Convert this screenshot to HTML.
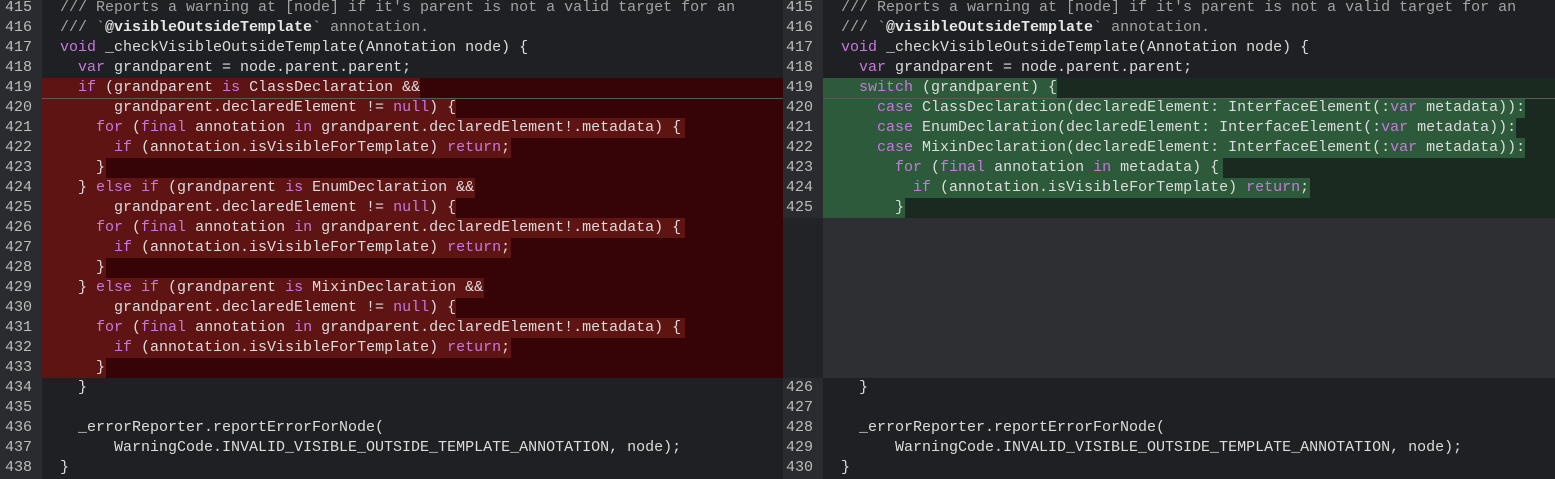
<!DOCTYPE html>
<html><head><meta charset="utf-8"><style>
*{margin:0;padding:0;box-sizing:border-box}
body{width:1555px;height:479px;background:#1f2023;overflow:hidden;position:relative;font-family:"Liberation Mono",monospace;font-size:15px;color:#dcdcdc}
.g{position:absolute;top:0;height:479px;background:#2a2b2f}
.r{position:absolute;height:20px;line-height:20px;white-space:pre}
.n{position:absolute;height:20px;line-height:20px;color:#bdbdbd;text-align:right;width:32px}
.k{color:#c679dd}
.c{color:#a3a3a3}
.b{color:#e6e6e6;font-weight:bold}
.hl{position:absolute;height:20px}
</style></head><body>
<div class="g" style="left:0;width:42px"></div>
<div class="g" style="left:783px;width:40px"></div>
<div style="position:absolute;left:42px;top:78px;width:741px;height:300px;background:#360406"></div>
<div style="position:absolute;left:823px;top:78px;width:732px;height:140px;background:#1b2a21"></div>
<div style="position:absolute;left:783px;top:218px;width:40px;height:160px;background:#222326"></div>
<div style="position:absolute;left:823px;top:218px;width:732px;height:160px;background:#2e2f33"></div>
<!-- red highlights -->
<div class="hl" style="left:42px;top:78px;width:378px;background:#5f1414"></div>
<div class="hl" style="left:42px;top:98px;width:414px;background:#5f1414"></div>
<div class="hl" style="left:42px;top:118px;width:643px;background:#5f1414"></div>
<div class="hl" style="left:42px;top:138px;width:469px;background:#5f1414"></div>
<div class="hl" style="left:42px;top:158px;width:64px;background:#5f1414"></div>
<div class="hl" style="left:42px;top:178px;width:433px;background:#5f1414"></div>
<div class="hl" style="left:42px;top:198px;width:414px;background:#5f1414"></div>
<div class="hl" style="left:42px;top:218px;width:643px;background:#5f1414"></div>
<div class="hl" style="left:42px;top:238px;width:469px;background:#5f1414"></div>
<div class="hl" style="left:42px;top:258px;width:64px;background:#5f1414"></div>
<div class="hl" style="left:42px;top:278px;width:442px;background:#5f1414"></div>
<div class="hl" style="left:42px;top:298px;width:414px;background:#5f1414"></div>
<div class="hl" style="left:42px;top:318px;width:643px;background:#5f1414"></div>
<div class="hl" style="left:42px;top:338px;width:469px;background:#5f1414"></div>
<div class="hl" style="left:42px;top:358px;width:64px;background:#5f1414"></div>
<!-- green highlights -->
<div class="hl" style="left:823px;top:78px;width:234px;background:#2d5a3b"></div>
<div class="hl" style="left:823px;top:98px;width:702px;background:#2d5a3b"></div>
<div class="hl" style="left:823px;top:118px;width:693px;background:#2d5a3b"></div>
<div class="hl" style="left:823px;top:138px;width:702px;background:#2d5a3b"></div>
<div class="hl" style="left:823px;top:158px;width:400px;background:#2d5a3b"></div>
<div class="hl" style="left:823px;top:178px;width:487px;background:#2d5a3b"></div>
<div class="hl" style="left:823px;top:198px;width:82px;background:#2d5a3b"></div>
<div style="position:absolute;left:42px;top:98px;width:741px;height:1px;background:#5a5a5a"></div>
<div style="position:absolute;left:823px;top:98px;width:732px;height:1px;background:#5a5a5a"></div>

<div class="n" style="left:0;top:-2px">415</div>
<div class="n" style="left:0;top:18px">416</div>
<div class="n" style="left:0;top:38px">417</div>
<div class="n" style="left:0;top:58px">418</div>
<div class="n" style="left:0;top:78px">419</div>
<div class="n" style="left:0;top:98px">420</div>
<div class="n" style="left:0;top:118px">421</div>
<div class="n" style="left:0;top:138px">422</div>
<div class="n" style="left:0;top:158px">423</div>
<div class="n" style="left:0;top:178px">424</div>
<div class="n" style="left:0;top:198px">425</div>
<div class="n" style="left:0;top:218px">426</div>
<div class="n" style="left:0;top:238px">427</div>
<div class="n" style="left:0;top:258px">428</div>
<div class="n" style="left:0;top:278px">429</div>
<div class="n" style="left:0;top:298px">430</div>
<div class="n" style="left:0;top:318px">431</div>
<div class="n" style="left:0;top:338px">432</div>
<div class="n" style="left:0;top:358px">433</div>
<div class="n" style="left:0;top:378px">434</div>
<div class="n" style="left:0;top:398px">435</div>
<div class="n" style="left:0;top:418px">436</div>
<div class="n" style="left:0;top:438px">437</div>
<div class="n" style="left:0;top:458px">438</div>

<div class="r" style="left:60px;top:-2px"><span class="c">/// Reports a warning at [node] if it's parent is not a valid target for an</span></div>
<div class="r" style="left:60px;top:18px"><span class="c">/// `</span><span class="b">@visibleOutsideTemplate</span><span class="c">` annotation.</span></div>
<div class="r" style="left:60px;top:38px"><span class="k">void</span> _checkVisibleOutsideTemplate(Annotation node) {</div>
<div class="r" style="left:60px;top:58px">  <span class="k">var</span> grandparent = node.parent.parent;</div>
<div class="r" style="left:60px;top:78px">  <span class="k">if</span> (grandparent <span class="k">is</span> ClassDeclaration &amp;&amp;</div>
<div class="r" style="left:60px;top:98px">      grandparent.declaredElement != <span class="k">null</span>) {</div>
<div class="r" style="left:60px;top:118px">    <span class="k">for</span> (<span class="k">final</span> annotation <span class="k">in</span> grandparent.declaredElement!.metadata) {</div>
<div class="r" style="left:60px;top:138px">      <span class="k">if</span> (annotation.isVisibleForTemplate) <span class="k">return</span>;</div>
<div class="r" style="left:60px;top:158px">    }</div>
<div class="r" style="left:60px;top:178px">  } <span class="k">else if</span> (grandparent <span class="k">is</span> EnumDeclaration &amp;&amp;</div>
<div class="r" style="left:60px;top:198px">      grandparent.declaredElement != <span class="k">null</span>) {</div>
<div class="r" style="left:60px;top:218px">    <span class="k">for</span> (<span class="k">final</span> annotation <span class="k">in</span> grandparent.declaredElement!.metadata) {</div>
<div class="r" style="left:60px;top:238px">      <span class="k">if</span> (annotation.isVisibleForTemplate) <span class="k">return</span>;</div>
<div class="r" style="left:60px;top:258px">    }</div>
<div class="r" style="left:60px;top:278px">  } <span class="k">else if</span> (grandparent <span class="k">is</span> MixinDeclaration &amp;&amp;</div>
<div class="r" style="left:60px;top:298px">      grandparent.declaredElement != <span class="k">null</span>) {</div>
<div class="r" style="left:60px;top:318px">    <span class="k">for</span> (<span class="k">final</span> annotation <span class="k">in</span> grandparent.declaredElement!.metadata) {</div>
<div class="r" style="left:60px;top:338px">      <span class="k">if</span> (annotation.isVisibleForTemplate) <span class="k">return</span>;</div>
<div class="r" style="left:60px;top:358px">    }</div>
<div class="r" style="left:60px;top:378px">  }</div>
<div class="r" style="left:60px;top:418px">  _errorReporter.reportErrorForNode(</div>
<div class="r" style="left:60px;top:438px">      WarningCode.INVALID_VISIBLE_OUTSIDE_TEMPLATE_ANNOTATION, node);</div>
<div class="r" style="left:60px;top:458px">}</div>

<div class="n" style="left:781px;top:-2px">415</div>
<div class="n" style="left:781px;top:18px">416</div>
<div class="n" style="left:781px;top:38px">417</div>
<div class="n" style="left:781px;top:58px">418</div>
<div class="n" style="left:781px;top:78px">419</div>
<div class="n" style="left:781px;top:98px">420</div>
<div class="n" style="left:781px;top:118px">421</div>
<div class="n" style="left:781px;top:138px">422</div>
<div class="n" style="left:781px;top:158px">423</div>
<div class="n" style="left:781px;top:178px">424</div>
<div class="n" style="left:781px;top:198px">425</div>
<div class="n" style="left:781px;top:378px">426</div>
<div class="n" style="left:781px;top:398px">427</div>
<div class="n" style="left:781px;top:418px">428</div>
<div class="n" style="left:781px;top:438px">429</div>
<div class="n" style="left:781px;top:458px">430</div>

<div class="r" style="left:841px;top:-2px"><span class="c">/// Reports a warning at [node] if it's parent is not a valid target for an</span></div>
<div class="r" style="left:841px;top:18px"><span class="c">/// `</span><span class="b">@visibleOutsideTemplate</span><span class="c">` annotation.</span></div>
<div class="r" style="left:841px;top:38px"><span class="k">void</span> _checkVisibleOutsideTemplate(Annotation node) {</div>
<div class="r" style="left:841px;top:58px">  <span class="k">var</span> grandparent = node.parent.parent;</div>
<div class="r" style="left:841px;top:78px">  <span class="k">switch</span> (grandparent) {</div>
<div class="r" style="left:841px;top:98px">    <span class="k">case</span> ClassDeclaration(declaredElement: InterfaceElement(:<span class="k">var</span> metadata)):</div>
<div class="r" style="left:841px;top:118px">    <span class="k">case</span> EnumDeclaration(declaredElement: InterfaceElement(:<span class="k">var</span> metadata)):</div>
<div class="r" style="left:841px;top:138px">    <span class="k">case</span> MixinDeclaration(declaredElement: InterfaceElement(:<span class="k">var</span> metadata)):</div>
<div class="r" style="left:841px;top:158px">      <span class="k">for</span> (<span class="k">final</span> annotation <span class="k">in</span> metadata) {</div>
<div class="r" style="left:841px;top:178px">        <span class="k">if</span> (annotation.isVisibleForTemplate) <span class="k">return</span>;</div>
<div class="r" style="left:841px;top:198px">      }</div>
<div class="r" style="left:841px;top:378px">  }</div>
<div class="r" style="left:841px;top:418px">  _errorReporter.reportErrorForNode(</div>
<div class="r" style="left:841px;top:438px">      WarningCode.INVALID_VISIBLE_OUTSIDE_TEMPLATE_ANNOTATION, node);</div>
<div class="r" style="left:841px;top:458px">}</div>
</body></html>
